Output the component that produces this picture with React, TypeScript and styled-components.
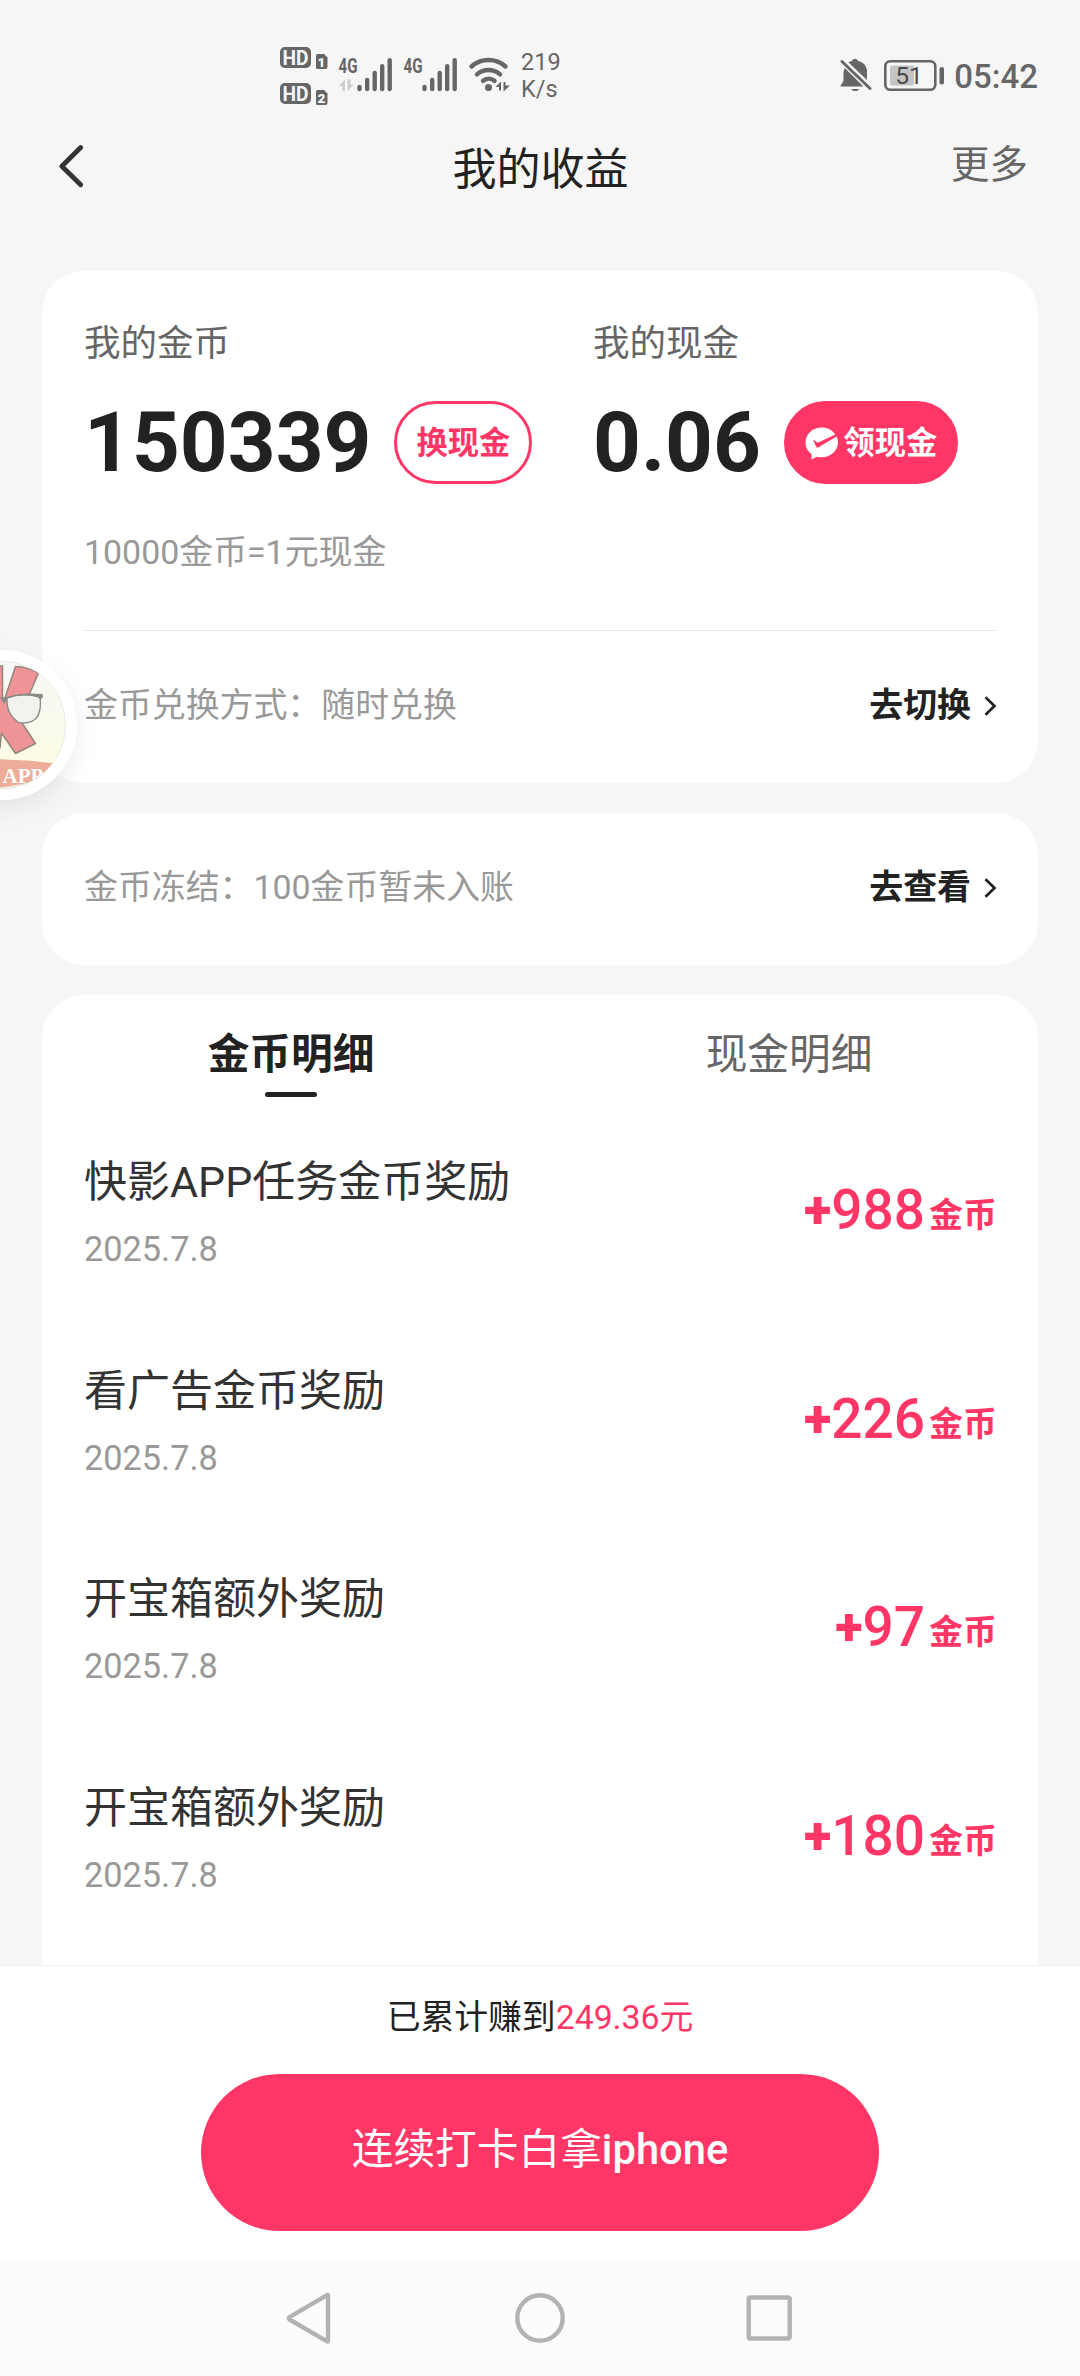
import React from 'react';
import styled, { createGlobalStyle } from 'styled-components';

const PINK = '#ff3666';
const INK = '#222222';
const STATUS = '#666666';

const GlobalStyle = createGlobalStyle`
  * { box-sizing: border-box; }
  body {
    margin: 0;
    background: #f6f6f6;
    font-family: Roboto, "Noto Sans CJK SC", sans-serif;
    color: ${INK};
  }
  button { font-family: inherit; margin: 0; padding: 0; border: 0; background: none; }
  svg { display: block; flex: none; }
`;

const Screen = styled.div`
  position: relative;
  width: 1080px;
  height: 2376px;
  overflow: hidden;
  display: flex;
  flex-direction: column;
  background: #f6f6f6;
`;

const StatusBar = styled.div`
  height: 120px;
  flex: none;
  display: flex;
  justify-content: space-between;
  padding: 40px 42px 0 280px;
  color: ${STATUS};
`;

const StatusGroup = styled.div`
  display: flex;
  align-items: flex-start;
`;

const NetSpeed = styled.div`
  padding: 9px 0 0 11px;
  font-size: 23.5px;
  line-height: 27px;
`;

const Clock = styled.div`
  padding-top: 17px;
  margin-left: 8px;
  font-size: 33px;
  line-height: 39px;
  font-weight: 500;
`;

const Header = styled.header`
  height: 151px;
  flex: none;
  display: grid;
  grid-template-columns: 200px 1fr 200px;
  padding: 20px 52px 0 53px;
`;

const BackButton = styled.button`
  display: flex;
  align-items: flex-start;
`;

const Title = styled.h1`
  margin: 0;
  padding-top: 4px;
  text-align: center;
  font-size: 44px;
  line-height: 52px;
  height: 56px;
  font-weight: 400;
`;

const MoreLink = styled.div`
  padding-top: 2px;
  text-align: right;
  font-size: 38.5px;
  line-height: 46px;
  height: 48px;
  color: #666;
`;

const Main = styled.main`
  flex: 1;
  min-height: 0;
  overflow: hidden;
  display: flex;
  flex-direction: column;
  gap: 30.5px;
  padding: 0 42px;
`;

const Card = styled.section<{ $height: number }>`
  flex: none;
  height: ${(p) => p.$height}px;
  padding: 0 42px;
  border-radius: 42px;
  background: #fff;
`;

const Balances = styled.div`
  display: grid;
  grid-template-columns: 509px 1fr;
  padding-top: 51px;
`;

const BalanceLabel = styled.div`
  height: 44px;
  line-height: 44px;
  font-size: 36.5px;
  color: #666;
`;

const BalanceRow = styled.div`
  display: flex;
  align-items: center;
  gap: 23px;
  margin-top: 35px;
  height: 83px;
`;

const BalanceValue = styled.div`
  font-size: 83.5px;
  line-height: 83px;
  font-weight: 700;
`;

const PillButton = styled.button<{ $filled?: boolean; $width: number }>`
  width: ${(p) => p.$width}px;
  height: 83px;
  border-radius: 42px;
  border: 3px solid ${PINK};
  background: ${(p) => (p.$filled ? PINK : '#fff')};
  color: ${(p) => (p.$filled ? '#fff' : PINK)};
  display: flex;
  align-items: center;
  justify-content: center;
  gap: 5px;
  padding-top: 2px;
  font-size: 31.3px;
  line-height: 36px;
  font-weight: 700;
`;

const RateNote = styled.div`
  margin-top: 48px;
  height: 41px;
  line-height: 41px;
  font-size: 33.9px;
  color: #999;
`;

const Divider = styled.hr`
  margin: 57px 0 0;
  border: 0;
  height: 1px;
  background: #e6e6e6;
`;

const InfoRow = styled.div`
  height: 151px;
  display: flex;
  align-items: center;
  justify-content: space-between;
  padding-bottom: 2px;
  font-size: 33.9px;
  line-height: 40px;
  color: #999;
`;

const InfoAction = styled.span`
  display: flex;
  align-items: center;
  gap: 13px;
  margin-right: -1px;
  font-weight: 700;
  color: ${INK};
`;

const Tabs = styled.div`
  display: grid;
  grid-template-columns: 1fr 1fr;
  height: 131px;
  margin: 0 -42px;
`;

const Tab = styled.div<{ $active?: boolean }>`
  display: flex;
  flex-direction: column;
  align-items: center;
  padding-top: 35px;
  font-size: 41.7px;
  line-height: 50px;
  font-weight: ${(p) => (p.$active ? 700 : 400)};
  color: ${(p) => (p.$active ? INK : '#666')};
`;

const TabLabel = styled.span`
  height: 50px;
`;

const TabMark = styled.span`
  width: 52px;
  height: 5px;
  margin-top: 12px;
  border-radius: 3px;
  background: ${INK};
`;

const Entry = styled.div`
  height: 208.7px;
  display: flex;
  justify-content: space-between;
  padding-top: 30px;
`;

const EntryTitle = styled.div`
  height: 52px;
  font-size: 43px;
  line-height: 52px;
  color: #333;
`;

const EntryDate = styled.div`
  margin-top: 21px;
  height: 40px;
  font-size: 34.3px;
  line-height: 40px;
  color: #999;
`;

const Amount = styled.div`
  display: flex;
  align-items: flex-start;
  margin-right: -1px;
  padding-top: 21px;
  height: 90px;
  font-size: 55px;
  line-height: 66px;
  font-weight: 500;
  color: ${PINK};
`;

const Plus = styled.span`
  padding-top: 1px;
  font-size: 51px;
  font-weight: 900;
`;

const Unit = styled.span`
  height: 60px;
  margin-left: 4px;
  padding-top: 17px;
  font-size: 34px;
  line-height: 42px;
  font-weight: 700;
`;

const Footer = styled.footer`
  height: 296px;
  flex: none;
  display: flex;
  flex-direction: column;
  align-items: center;
  border-top: 1px solid #f0f0f0;
  background: #fff;
`;

const Earned = styled.div`
  margin-top: 32px;
  height: 40px;
  font-size: 33.8px;
  line-height: 40px;
`;

const Pink = styled.span`
  color: ${PINK};
`;

const CheckInButton = styled.button`
  width: 678px;
  height: 157px;
  margin-top: 36px;
  padding-bottom: 5px;
  border-radius: 79px;
  background: ${PINK};
  color: #fff;
  font-size: 41.7px;
  line-height: 50px;
`;

const Strong = styled.span`
  font-weight: 500;
`;

const NavBar = styled.nav`
  height: 115px;
  flex: none;
  display: flex;
  justify-content: space-between;
  padding: 28px 284px 0 284px;
  background: #fcfcfc;
`;

const FloatingBadge = styled.div`
  position: absolute;
  left: -73px;
  top: 650px;
  width: 150px;
  height: 150px;
  border-radius: 50%;
  background: rgba(255, 255, 255, 0.93);
  box-shadow: 0 8px 24px rgba(0, 0, 0, 0.08);
  padding: 11px;
`;

const SimIcon = ({ n }: { n: number }) => (
  <g transform={`translate(0 ${n === 1 ? 0 : 36})`}>
    <rect x="0" y="7" width="31" height="21" rx="5" fill={STATUS} />
    <text x="15.5" y="24.7" textAnchor="middle" textLength="26" lengthAdjust="spacingAndGlyphs" fontSize="20" fontWeight="700" fill="#f6f6f6">HD</text>
    <path d="M37.500 14h6.500l3.500 3.500v9.500a2 2 0 0 1-2 2h-8a1.500 1.500 0 0 1-1.500-1.500v-12a1.500 1.500 0 0 1 1.500-1.500z" fill={STATUS} />
    <text x="41.500" y="26.500" textAnchor="middle" fontSize="13.500" fontWeight="900" fill="#f6f6f6">{n}</text>
  </g>
);

const DualSim = () => (
  <svg width="58" height="70" viewBox="0 0 58 70">
    <SimIcon n={1} />
    <SimIcon n={2} />
  </svg>
);

const BARS = [
  [21.5, 87],
  [29.2, 80],
  [36.7, 73],
  [44.2, 66.3],
  [51.7, 60.3],
];

const Signal = ({ data }: { data?: boolean }) => (
  <svg width="65" height="70" viewBox="0 40 65 70">
    <text x="0.500" y="73" textLength="19" lengthAdjust="spacingAndGlyphs" fontSize="20.500" fontWeight="700" fill={STATUS}>4G</text>
    {data && (
      <path d="M1 86l6-6.500v11.500h-2.500v-5zM9.500 79.500v11.500l6-6.500h-3v-5z" fill="#cccccc" />
    )}
    {BARS.map(([x, top]) => (
      <line key={x} x1={x} x2={x} y1={top} y2="89" stroke={STATUS} strokeWidth="4.400" strokeLinecap="round" />
    ))}
  </svg>
);

const Wifi = () => (
  <svg width="42" height="70" viewBox="466 40 42 70" fill="none" stroke={STATUS} strokeWidth="4.400" strokeLinecap="round">
    <path d="M469.500 66.500a25.500 25.500 0 0 1 34 0" />
    <path d="M475 74.300a17.500 17.500 0 0 1 23 0" />
    <path d="M481 80.800a9 9 0 0 1 11.500 0" />
    <circle cx="486.500" cy="87.500" r="3.500" fill={STATUS} stroke="none" />
    <path d="M493.500 87l5.500-5.500v9h-2v-3.500zM501.500 82h2v3.500h4.500l-6.500 6z" fill={STATUS} stroke="none" />
  </svg>
);

const MutedBell = () => (
  <svg width="44" height="70" viewBox="839 40 44 70">
    <path d="M843.800 68L862.500 86.500h-23c0-2 3-3.500 3-7v-7c0-1.500.5-3 1.300-4.500zM847.500 62.500c1-.8 2-1.300 3.500-1.500 1-3 5-3 6 0 6 1.300 9 5.500 9 10.500v8.500z" fill={STATUS} />
    <path d="M841 61.500l28 27" stroke={STATUS} strokeWidth="3" strokeLinecap="round" />
    <path d="M850.500 89h7.500c-.5 2.700-7 2.700-7.500 0z" fill={STATUS} />
  </svg>
);

const Battery = () => (
  <svg width="62" height="70" viewBox="883 40 62 70">
    <rect x="884.300" y="61.300" width="50" height="28.500" rx="5" fill="none" stroke={STATUS} strokeWidth="2.600" />
    <rect x="889" y="65.500" width="24" height="20" rx="2" fill="#c4c4c4" />
    <rect x="938.500" y="67" width="4.500" height="17.500" rx="2" fill={STATUS} />
    <text x="908" y="83.800" textAnchor="middle" fontSize="24.500" fill="#4a4a4a">51</text>
  </svg>
);

const BackIcon = () => (
  <svg width="40" height="52" viewBox="53 140 40 52">
    <path d="M80.700 147.500L61.800 166.200 80.700 184.800" fill="none" stroke="#333" strokeWidth="4.800" strokeLinecap="round" strokeLinejoin="round" />
  </svg>
);

const Chevron = () => (
  <svg width="13" height="20" viewBox="0 0 13 20">
    <path d="M1.500 1.200L10.500 10 1.500 18.800" fill="none" stroke={INK} strokeWidth="2.700" />
  </svg>
);

const ChatCheck = () => (
  <svg width="34" height="34" viewBox="0 0 34 34">
    <path d="M16.500 0.500C7.500 0.500 0.500 7.200 0.500 15.500c0 5 2.200 9 6.200 11.800L6.200 32.500l5.600-2.800c1.500.4 3 .6 4.700.6 9 0 16.500-6.500 16.500-14.800 0-2-.5-4.200-1.400-6L13.500 20.300c-1 .6-1.700.4-2.200-.6L7.800 12.500l4.200 2.800c.6.300 1.200.3 1.900 0L30.300 7.400C27.300 3.200 22.300.5 16.500.5z" fill="#fff" />
  </svg>
);

const BadgeArt = () => (
  <svg width="128" height="128" viewBox="-62 661 128 128" opacity="0.950">
    <defs>
      <clipPath id="badge">
        <circle cx="2" cy="725" r="63.500" />
      </clipPath>
      <linearGradient id="cream" x1="0" y1="0" x2="0" y2="1">
        <stop offset="0" stopColor="#f5f9f5" />
        <stop offset="0.500" stopColor="#fafaec" />
        <stop offset="1" stopColor="#fdfddc" />
      </linearGradient>
    </defs>
    <g clipPath="url(#badge)">
      <rect x="-62" y="661" width="128" height="128" fill="url(#cream)" />
      <path d="M-20 666H2.500V700L5 698 15.500 666.500Q28 667 38.500 673L29 695 17 705 22 723 35.500 743.500 15.500 753.500 1.500 733 0 748H-20z" fill="#ee8f92" stroke="#8d8078" strokeWidth="1.500" strokeLinejoin="round" />
      <path d="M7 697.500Q21 692.500 40 696.500Q42 711 36 718.500Q28 725 18 722Q6 714 7 697.500z" fill="#f0f4ec" stroke="#82827c" strokeWidth="1.300" />
      <path d="M0 697l7 .5Q22 692 42.500 694l.5 3-2.500 3q-1-2.500-4-3Q21 693.500 8 698.500L4 704z" fill="#858580" />
      <path d="M-62 761Q0 756 60 764V789H-62z" fill="#eba893" />
      <path d="M-62 790Q0 792 46 778L66 789V800H-62z" fill="#f3f1e8" />
      <text x="2.500" y="782.800" fontFamily="Liberation Serif, serif" fontWeight="700" fontSize="21" fill="#fff">APP</text>
    </g>
    <circle cx="2" cy="725" r="63.500" fill="none" stroke="#dde5da" strokeWidth="0.700" />
  </svg>
);

const NavBack = () => (
  <svg width="50" height="56" viewBox="284 2289 50 56">
    <path d="M328 2295.500v45.500q0 1-1 .3L289.500 2319.500q-1.500-1.200 0-2.400L327 2295.200q1-.7 1 .3z" fill="none" stroke="#b3b3b3" strokeWidth="4.400" strokeLinejoin="round" />
  </svg>
);

const NavHome = () => (
  <svg width="54" height="56" viewBox="513 2289 54 56">
    <circle cx="540" cy="2318" r="22.700" fill="none" stroke="#b3b3b3" strokeWidth="4.400" />
  </svg>
);

const NavRecent = () => (
  <svg width="50" height="56" viewBox="746 2289 50 56">
    <rect x="748.700" y="2297.500" width="41" height="41" rx="1.500" fill="none" stroke="#b3b3b3" strokeWidth="4.400" />
  </svg>
);

const ENTRIES = [
  { title: '快影APP任务金币奖励', date: '2025.7.8', amount: '988' },
  { title: '看广告金币奖励', date: '2025.7.8', amount: '226' },
  { title: '开宝箱额外奖励', date: '2025.7.8', amount: '97' },
  { title: '开宝箱额外奖励', date: '2025.7.8', amount: '180' },
];

const Info = ({ text, action }: { text: string; action: string }) => (
  <InfoRow>
    <span>{text}</span>
    <InfoAction>
      {action}
      <Chevron />
    </InfoAction>
  </InfoRow>
);

export default function App() {
  return (
    <>
      <GlobalStyle />
      <Screen>
        <StatusBar>
          <StatusGroup>
            <DualSim />
            <Signal data />
            <Signal />
            <Wifi />
            <NetSpeed>
              219
              <br />
              K/s
            </NetSpeed>
          </StatusGroup>
          <StatusGroup>
            <MutedBell />
            <Battery />
            <Clock>05:42</Clock>
          </StatusGroup>
        </StatusBar>
        <Header>
          <BackButton aria-label="back">
            <BackIcon />
          </BackButton>
          <Title>我的收益</Title>
          <MoreLink>更多</MoreLink>
        </Header>
        <Main>
          <Card $height={511.5}>
            <Balances>
              <div>
                <BalanceLabel>我的金币</BalanceLabel>
                <BalanceRow>
                  <BalanceValue>150339</BalanceValue>
                  <PillButton $width={138}>换现金</PillButton>
                </BalanceRow>
              </div>
              <div>
                <BalanceLabel>我的现金</BalanceLabel>
                <BalanceRow>
                  <BalanceValue>0.06</BalanceValue>
                  <PillButton $filled $width={174}>
                    <ChatCheck />
                    领现金
                  </PillButton>
                </BalanceRow>
              </div>
            </Balances>
            <RateNote>10000金币=1元现金</RateNote>
            <Divider />
            <Info text="金币兑换方式：随时兑换" action="去切换" />
          </Card>
          <Card $height={151.5}>
            <Info text="金币冻结：100金币暂未入账" action="去查看" />
          </Card>
          <Card $height={1100}>
            <Tabs>
              <Tab $active>
                <TabLabel>金币明细</TabLabel>
                <TabMark />
              </Tab>
              <Tab>
                <TabLabel>现金明细</TabLabel>
              </Tab>
            </Tabs>
            {ENTRIES.map((e, i) => (
              <Entry key={i}>
                <div>
                  <EntryTitle>{e.title}</EntryTitle>
                  <EntryDate>{e.date}</EntryDate>
                </div>
                <Amount>
                  <Plus>+</Plus>
                  {e.amount}
                  <Unit>金币</Unit>
                </Amount>
              </Entry>
            ))}
          </Card>
        </Main>
        <Footer>
          <Earned>
            已累计赚到<Pink>249.36元</Pink>
          </Earned>
          <CheckInButton>
            连续打卡白拿<Strong>iphone</Strong>
          </CheckInButton>
        </Footer>
        <NavBar>
          <NavBack />
          <NavHome />
          <NavRecent />
        </NavBar>
        <FloatingBadge>
          <BadgeArt />
        </FloatingBadge>
      </Screen>
    </>
  );
}
